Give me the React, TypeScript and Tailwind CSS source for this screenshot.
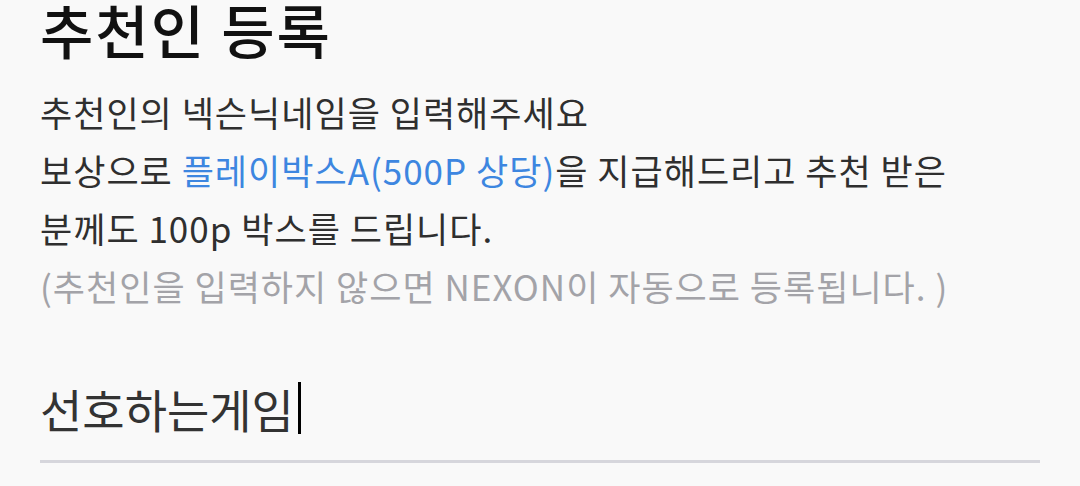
import React from 'react'

export default function App() {
  return (
    <div
      className="w-[1080px] h-[486px] overflow-hidden bg-[#f9f9f9] px-10"
      style={{ fontFamily: '"Noto Sans CJK KR", "Noto Sans", sans-serif' }}
    >
      {/* Title */}
      <h1 className="text-[58px] leading-[58px] font-medium tracking-[2px] text-[#111111]">추천인 등록</h1>

      {/* Description */}
      <div className="mt-[25px] text-[35px] leading-[58px] tracking-[1px] text-[#2f2f2f]">
        <p>추천인의 넥슨닉네임을 입력해주세요</p>
        <p>
          보상으로 <span className="text-[#3d86e0]">플레이박스A(500P 상당)</span>을 지급해드리고 추천 받은
        </p>
        <p>분께도 100p 박스를 드립니다.</p>
        <p className="text-[#a3a3a8]">(추천인을 입력하지 않으면 NEXON이 자동으로 등록됩니다. )</p>
      </div>

      {/* Input */}
      <div className="mt-[65px] border-b-[3px] border-[#d6d6dc] pb-[24px]">
        <div className="flex items-center text-[46px] leading-[56px] text-[#333333]">
          <span>선호하는게임</span>
          <span className="ml-[4px] w-[3px] h-[52px] bg-black"></span>
        </div>
      </div>
    </div>
  )
}
